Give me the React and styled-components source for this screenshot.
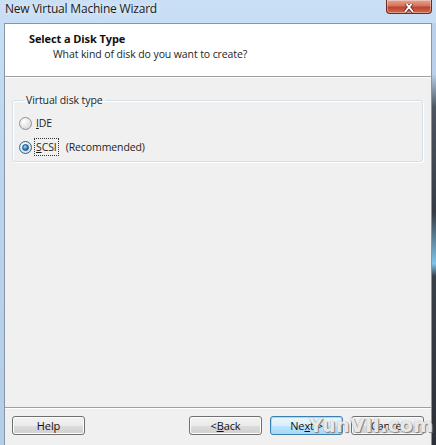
import React from 'react';
import styled, { createGlobalStyle } from 'styled-components';

const GlobalStyle = createGlobalStyle`
    html, body {
        margin: 0;
        padding: 0;
        background: #b9d1ea;
    }
    body {
        font-family: "Open Sans", "Liberation Sans", sans-serif;
        font-size: 10.5px;
        letter-spacing: -0.1px;
        color: #1e1e1e;
    }
`;

const Window = styled.div`
    width: 436px;
    height: 445px;
    display: grid;
    grid-template-columns: 4px 1fr 4px;
    grid-template-rows: 23px 1fr;
    overflow: hidden;
    background: linear-gradient(180deg, #c9dff5 0%, #bcd4ec 40%, #b4cde8 100%);
`;

const TitleBar = styled.div`
    grid-column: 1 / 4;
    display: flex;
    justify-content: space-between;
    align-items: flex-start;
    padding-left: 5px;
    padding-right: 5px;
`;

const Title = styled.div`
    font-size: 12px;
    line-height: 18px;
    color: #1a1a1a;
    text-shadow: 0 0 6px rgba(255, 255, 255, 0.9);
    letter-spacing: -0.2px;
`;

const CloseButton = styled.div`
    width: 44px;
    height: 13px;
    margin-right: -1px;
    border: 1px solid #6d2a22;
    border-top: none;
    border-radius: 0 0 4px 4px;
    background: linear-gradient(180deg, #e6a493 0%, #d4735e 45%, #c0432c 55%, #d06a4f 100%);
    box-shadow: inset 0 0 0 1px rgba(255, 255, 255, 0.35);
    display: flex;
    align-items: flex-end;
    justify-content: center;
    overflow: hidden;
`;

const LeftEdge = styled.div``;

const RightEdge = styled.div`
    background: linear-gradient(180deg, #b9d1ea 0%, #b9d1ea 12%, #4c5560 20%, #363c44 45%, #7ec4ea 57%, #3a4048 60%, #2c3138 100%);
`;

const Client = styled.div`
    background: #f0f0f0;
    border: 1px solid #8396aa;
    border-bottom: none;
    display: flex;
    flex-direction: column;
`;

const Header = styled.div`
    background: #ffffff;
    height: 53px;
    border-bottom: 1px solid #a0a0a0;
    box-shadow: 0 1px 0 #ffffff;
    padding: 7px 0 0 24px;
    box-sizing: border-box;
`;

const HeaderTitle = styled.div`
    font-weight: 700;
    font-size: 11px;
    line-height: 15px;
    color: #111;
`;

const HeaderSub = styled.div`
    padding-left: 24px;
    line-height: 16px;
    color: #1e1e1e;
`;

const Body = styled.div`
    flex: 1;
    padding: 16px 8px 0 7px;
`;

const GroupBox = styled.fieldset`
    margin: 0;
    padding: 7px 0 5px 6px;
    border: 1px solid #d5dfe5;
    border-radius: 3px;
    box-shadow: inset 1px 1px 0 #ffffff, 1px 1px 0 #ffffff;
    display: flex;
    flex-direction: column;
    gap: 6px;
`;

const Legend = styled.legend`
    margin-left: 5px;
    padding: 0 2px;
    line-height: 14px;
    color: #1e1e1e;
`;

const RadioRow = styled.label`
    display: flex;
    align-items: center;
    height: 18px;
    gap: 3px;
`;

const RadioCircle = styled.span`
    width: 11px;
    height: 11px;
    border-radius: 50%;
    border: 1px solid ${props => props.checked ? '#2c628b' : '#8f8f8f'};
    background: radial-gradient(circle at 35% 30%, #ffffff 0%, #e9e9e9 45%, #cfcfcf 100%);
    display: flex;
    align-items: center;
    justify-content: center;
    flex-shrink: 0;
`;

const RadioDot = styled.span`
    width: 5px;
    height: 5px;
    border-radius: 50%;
    background: radial-gradient(circle at 40% 35%, #a8e2ff 0%, #2b87d1 50%, #0d4f8b 100%);
    border: 1px solid #1b4f7c;
`;

const RadioText = styled.span`
    padding: 1px 1px;
    outline: ${props => props.focused ? '1px dotted #333' : 'none'};
    line-height: 14px;
`;

const Extra = styled.span`
    margin-left: 5px;
`;

const Footer = styled.div`
    border-top: 1px solid #a0a0a0;
    box-shadow: inset 0 1px 0 #ffffff;
    padding: 8px 7px 10px 7px;
    display: flex;
    gap: 8px;
`;

const Spacer = styled.div`
    flex: 1;
`;

const Button = styled.div`
    width: ${props => props.w || 71}px;
    height: 17px;
    border: 1px solid ${props => props.primary ? '#3c7fb1' : '#707070'};
    border-radius: 3px;
    background: ${props => props.primary
        ? 'linear-gradient(180deg, #eaf6fd 0%, #d9f0fc 50%, #bee6fd 51%, #a7d9f5 100%)'
        : 'linear-gradient(180deg, #f2f2f2 0%, #ebebeb 50%, #dddddd 51%, #cfcfcf 100%)'};
    box-shadow: inset 0 0 0 1px ${props => props.primary ? '#9edef9' : '#fcfcfc'};
    display: flex;
    align-items: center;
    justify-content: center;
    line-height: 15px;
    font-size: 11px;
    color: #111;
`;

const Watermark = styled.div`
    position: absolute;
    left: 309px;
    top: 414px;
    font-family: "DejaVu Sans", sans-serif;
    font-weight: 700;
    font-size: 19px;
    letter-spacing: 0.5px;
    color: rgba(255, 255, 255, 0.8);
    text-shadow: 0 0 1px #9a9a9a, 1px 1px 1px #7a7a7a;
    pointer-events: none;
`;

export default function App() {
    return (
        <>
            <GlobalStyle />
            <Window>
                <TitleBar>
                    <Title>New Virtual Machine Wizard</Title>
                    <CloseButton>
                        <svg width="14" height="9" viewBox="0 0 14 9">
                            <path d="M3 -2 L11 8 M11 -2 L3 8" stroke="#5a1c12" strokeWidth="3.4" />
                            <path d="M3 -2 L11 8 M11 -2 L3 8" stroke="#ffffff" strokeWidth="2" />
                        </svg>
                    </CloseButton>
                </TitleBar>
                <LeftEdge />
                <Client>
                    <Header>
                        <HeaderTitle>Select a Disk Type</HeaderTitle>
                        <HeaderSub>What kind of disk do you want to create?</HeaderSub>
                    </Header>
                    <Body>
                        <GroupBox>
                            <Legend>Virtual disk type</Legend>
                            <RadioRow>
                                <RadioCircle />
                                <RadioText><u>I</u>DE</RadioText>
                            </RadioRow>
                            <RadioRow>
                                <RadioCircle checked>
                                    <RadioDot />
                                </RadioCircle>
                                <RadioText focused><u>S</u>CSI</RadioText>
                                <Extra>(Recommended)</Extra>
                            </RadioRow>
                        </GroupBox>
                    </Body>
                    <Footer>
                        <Button w={71}>Help</Button>
                        <Spacer />
                        <Button w={71}>&lt; <u>B</u>ack</Button>
                        <Button w={71} primary>Ne<u>x</u>t &gt;</Button>
                        <Button w={71}>Cancel</Button>
                    </Footer>
                </Client>
                <RightEdge />
            </Window>
            <Watermark>YunVII.com</Watermark>
        </>
    );
}
